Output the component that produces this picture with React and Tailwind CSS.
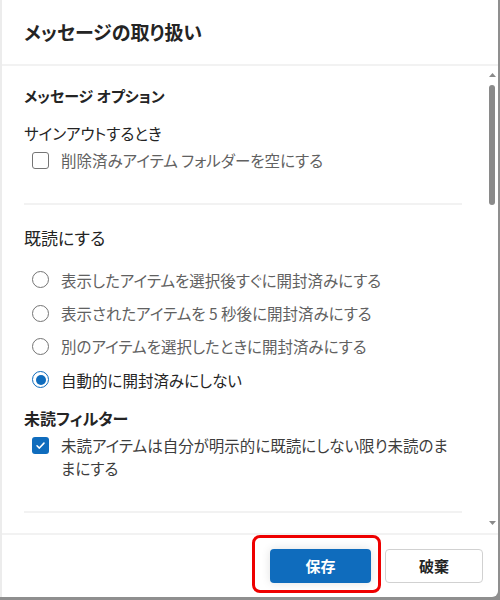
import React from 'react'

const FONT = "font-['Noto_Sans_CJK_JP','Noto_Sans',sans-serif] [font-feature-settings:'palt']"

function CheckBox({ checked }) {
  if (checked) {
    return (
      <span className="mt-[3px] flex h-[17px] w-[17px] shrink-0 items-center justify-center rounded-[3px] bg-[#0f6cbd]">
        <svg width="11" height="11" viewBox="0 0 12 12" fill="none">
          <path d="M2.2 6.3 4.8 8.8 9.8 3.4" stroke="white" strokeWidth="1.7" strokeLinecap="round" strokeLinejoin="round" />
        </svg>
      </span>
    )
  }
  return <span className="h-[17px] w-[17px] shrink-0 rounded-[3px] border border-[#757575] bg-white" />
}

function Radio({ checked, label }) {
  return (
    <div className="flex h-[33.4px] items-center">
      <span
        className={
          'flex h-[17px] w-[17px] shrink-0 items-center justify-center rounded-full border ' +
          (checked ? 'border-[#0f6cbd]' : 'border-[#757575]')
        }
      >
        {checked && <span className="h-[10px] w-[10px] rounded-full bg-[#0f6cbd]" />}
      </span>
      <span className={'ml-[12px] text-[15.5px] leading-[22px] ' + (checked ? 'text-[#242424]' : 'text-[#616161]')}>
        {label}
      </span>
    </div>
  )
}

function Scrollbar() {
  return (
    <div className="flex w-[12px] shrink-0 flex-col items-center pt-[7px] pb-[8px]">
      <svg width="7" height="4" viewBox="0 0 7 4"><path d="M0 4 3.5 0 7 4Z" fill="#8a8a8a" /></svg>
      <div className="mt-[8px] h-[120px] w-[6px] rounded-full bg-[#8a8a8a]" />
      <div className="flex-1" />
      <svg width="7" height="4" viewBox="0 0 7 4"><path d="M0 0 3.5 4 7 0Z" fill="#8a8a8a" /></svg>
    </div>
  )
}

export default function App() {
  const readOptions = [
    '表示したアイテムを選択後すぐに開封済みにする',
    '表示されたアイテムを 5 秒後に開封済みにする',
    '別のアイテムを選択したときに開封済みにする',
    '自動的に開封済みにしない',
  ]

  return (
    <div className={'flex h-[600px] w-[500px] flex-col bg-[#8f8f8f] ' + FONT}>
      <div className="flex h-[597px] w-[498px] flex-col rounded-br-[6px] border-l-2 border-[#ececec] bg-white">
        {/* header */}
        <div className="flex h-[66px] shrink-0 items-center border-b-2 border-[#f2f2f2] px-[22px]">
          <h1 className="text-[19px] font-semibold leading-[28px] text-[#242424]">メッセージの取り扱い</h1>
        </div>

        {/* scrolling body */}
        <div className="flex min-h-0 flex-1 overflow-hidden">
          <div className="flex-1 pl-[22px] pr-[24px] pt-[18px]">
            <h2 className="text-[15px] font-semibold leading-[24px] text-[#242424]">メッセージ オプション</h2>
            <p className="mt-[14px] text-[15.5px] leading-[22px] text-[#242424]">サインアウトするとき</p>
            <label className="mt-[5px] flex items-center pl-[8px]">
              <CheckBox />
              <span className="ml-[12px] text-[15.5px] leading-[22px] text-[#616161]">削除済みアイテム フォルダーを空にする</span>
            </label>

            <div className="mt-[32px] h-[2px] bg-[#f2f2f2]" />

            <h2 className="mt-[20px] text-[17px] leading-[26px] text-[#242424]">既読にする</h2>
            <div className="mt-[12px] pl-[8px]">
              {readOptions.map((o, i) => (
                <Radio key={o} label={o} checked={i === 3} />
              ))}
            </div>

            <h2 className="mt-[9px] text-[16px] font-semibold leading-[24px] text-[#242424]">未読フィルター</h2>
            <label className="mt-[4px] flex items-start pl-[8px]">
              <CheckBox checked />
              <span className="ml-[12px] flex-1 text-[15.5px] leading-[23px] text-[#3d3d3d]">
                未読アイテムは自分が明示的に既読にしない限り未読のままにする
              </span>
            </label>

            <div className="mt-[31px] h-[2px] bg-[#f2f2f2]" />
          </div>
          <Scrollbar />
        </div>

        {/* footer */}
        <div className="flex h-[64px] shrink-0 items-center justify-end gap-[14px] border-t-2 border-[#f2f2f2] pr-[15px]">
          <div className="relative">
            <button className="h-[34px] w-[101px] rounded-[4px] bg-[#0f6cbd] text-[15px] font-bold text-white shadow-[0_0_10px_rgba(0,0,0,0.12)]">
              保存
            </button>
            <div className="pointer-events-none absolute -bottom-[10px] -left-[18px] -right-[10px] -top-[14px] rounded-[8px] border-[3px] border-[#ee0000]" />
          </div>
          <button className="h-[34px] w-[98px] rounded-[4px] border border-[#d1d1d1] bg-white text-[15px] font-bold text-[#242424]">
            破棄
          </button>
        </div>
      </div>
    </div>
  )
}
